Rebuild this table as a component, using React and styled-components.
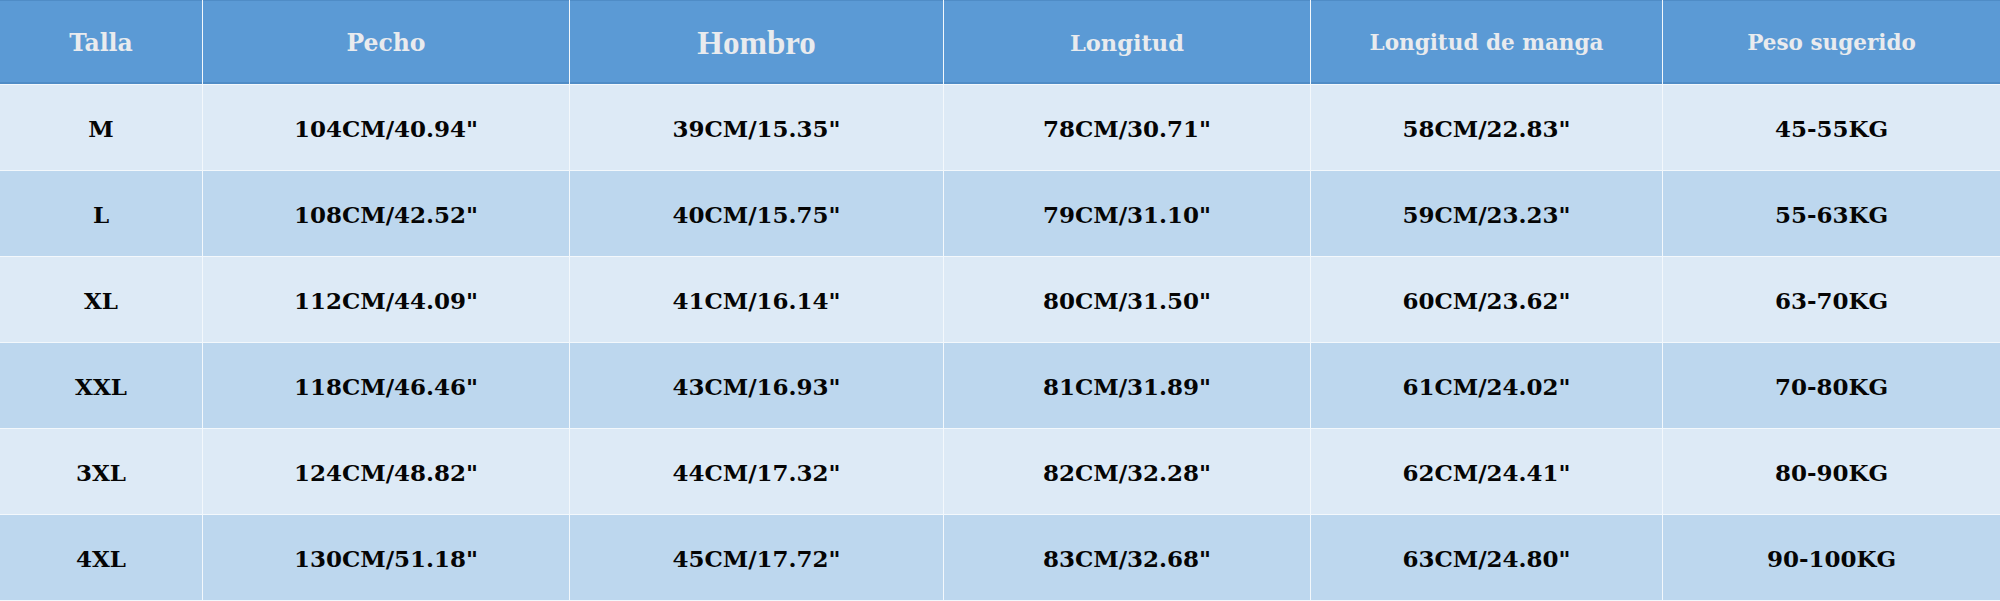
import React from "react";
import styled, { createGlobalStyle } from "styled-components";

const GlobalStyle = createGlobalStyle`
  html, body {
    margin: 0;
    padding: 0;
    background: #f3f8fc;
  }
`;

const columns = [
  { key: "talla", label: "Talla", width: 202, size: 23.5 },
  { key: "pecho", label: "Pecho", width: 366, size: 23.5 },
  { key: "hombro", label: "Hombro", width: 373, big: true },
  { key: "longitud", label: "Longitud", width: 366, size: 22.5 },
  { key: "manga", label: "Longitud de manga", width: 351, size: 21.5 },
  { key: "peso", label: "Peso sugerido", width: 337, size: 21.5 },
];

const rows = [
  ["M", "104CM/40.94\"", "39CM/15.35\"", "78CM/30.71\"", "58CM/22.83\"", "45-55KG"],
  ["L", "108CM/42.52\"", "40CM/15.75\"", "79CM/31.10\"", "59CM/23.23\"", "55-63KG"],
  ["XL", "112CM/44.09\"", "41CM/16.14\"", "80CM/31.50\"", "60CM/23.62\"", "63-70KG"],
  ["XXL", "118CM/46.46\"", "43CM/16.93\"", "81CM/31.89\"", "61CM/24.02\"", "70-80KG"],
  ["3XL", "124CM/48.82\"", "44CM/17.32\"", "82CM/32.28\"", "62CM/24.41\"", "80-90KG"],
  ["4XL", "130CM/51.18\"", "45CM/17.72\"", "83CM/32.68\"", "63CM/24.80\"", "90-100KG"],
];

const Table = styled.div`
  display: grid;
  grid-template-columns: ${(p) => p.$cols};
  grid-template-rows: 84px repeat(6, 85px);
  column-gap: 1px;
  row-gap: 1px;
  width: 2000px;
  height: 601px;
  background: #f3f8fc;
  box-sizing: border-box;
  padding-bottom: 1px;
`;

const HeadCell = styled.div`
  display: flex;
  align-items: center;
  justify-content: center;
  background: #5b9ad5;
  border-top: 1px solid #4f8cc6;
  border-bottom: 2px solid #4f8cc6;
  color: #e9ebee;
  font-family: ${(p) =>
    p.$big ? '"Liberation Serif", serif' : '"DejaVu Serif", serif'};
  font-weight: 700;
  font-size: ${(p) => (p.$big ? "33px" : `${p.$size}px`)};
  padding-top: ${(p) => (p.$big ? "4px" : "2px")};
  box-sizing: border-box;
`;

const Cell = styled.div`
  display: flex;
  align-items: center;
  justify-content: center;
  background: ${(p) => (p.$odd ? "#bdd7ee" : "#ddeaf6")};
  color: #050505;
  font-family: "DejaVu Serif", serif;
  font-weight: 700;
  font-size: 23px;
  padding-top: 2px;
`;

export default function App() {
  const cols = columns.map((c) => `${c.width}px`).join(" ");
  return (
    <>
      <GlobalStyle />
      <Table $cols={cols}>
        {columns.map((c) => (
          <HeadCell key={c.key} $big={c.big} $size={c.size}>
            {c.label}
          </HeadCell>
        ))}
        {rows.map((row, i) =>
          row.map((val, j) => (
            <Cell key={`${i}-${j}`} $odd={i % 2 === 1}>
              {val}
            </Cell>
          ))
        )}
      </Table>
    </>
  );
}
